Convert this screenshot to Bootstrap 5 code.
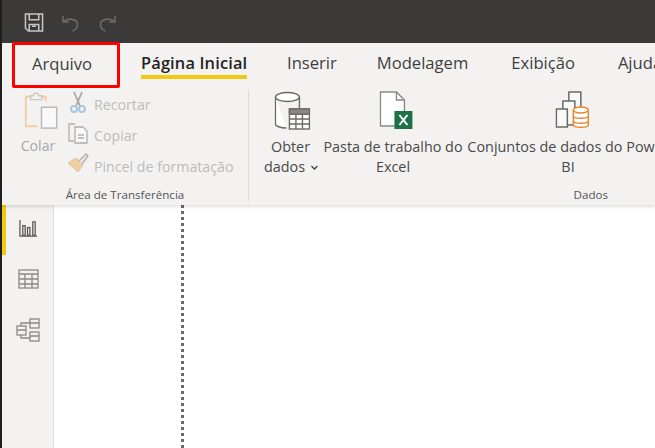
<!DOCTYPE html>
<html lang="pt">
<head>
<meta charset="utf-8">
<title>Power BI</title>
<link href="https://cdn.jsdelivr.net/npm/bootstrap@5.3.0/dist/css/bootstrap.min.css" rel="stylesheet">
<style>
html,body{height:448px;overflow:hidden;background:#fff}
body{font-family:"Open Sans","Noto Sans",sans-serif;color:#333;border-left:2px solid #1e1e1e;width:655px}
.titlebar{height:43px;background:#3b3a39;padding:13px 0 0 22px;gap:19px}
.undoicon{margin-top:1px;margin-left:-1px}
.tabsbar{height:43px;background:#f3f2f1;font-size:16.6px;color:#3f3e3d}
.tabitem{height:46px;margin-top:-1px;line-height:42px;white-space:nowrap;flex:none}
.tabfile{width:108px;margin-left:10px;border:3px solid #f00;border-radius:2px;padding-left:17px;line-height:38px;position:relative;z-index:2}
.tabhome{margin-left:21px;width:106px;font-weight:600;color:#252423;font-size:16.400px;letter-spacing:.15px}
.tabhome span{display:block;height:4px;background:#f2c811;margin-top:-9px;position:relative}
.tabinsert{margin-left:40px}
.tabmodel{margin-left:40px}
.tabnext{margin-left:43px}
.ribbon{height:119px;background:#f3f2f1;box-shadow:0 2px 3px rgba(0,0,0,.12);position:relative;z-index:1;font-size:14.200px;overflow:hidden}
.clipgroup{width:247px;flex:none;border-right:1px solid #dcdbda;margin-top:4px;height:111px;position:relative}
.pasteitem{width:58px;flex:none;text-align:center;color:#a9a8a7;padding-top:2px;line-height:20px;margin-left:7px}
.pasteitem svg{display:block;margin:0 auto 6px 14px}
.smallitems{color:#bdbcbb;margin-top:-1px;padding-top:1px}
.smallrow{height:31px;line-height:30px;gap:5px;white-space:nowrap}
.smallrow svg{width:22px;flex:none}
.grouplabel{position:absolute;left:0;right:0;bottom:-2px;text-align:center;font-size:11.600px;line-height:16px;color:#555453}
.datagroup{flex:1 1 auto;position:relative;height:111px;margin-top:4px;min-width:0}
.labeldata{left:auto;right:47px}
.bigitem{position:absolute;top:1px;text-align:center;line-height:20px;color:#4a4948;white-space:nowrap;transform:translateX(-50%);font-size:14.400px}
.bigicon{display:block;margin:0 auto 6px;position:relative}
.iconget{left:2px}
.iconexcel{left:3px}
.iconsets{left:4px;margin-bottom:8px}
.chevron{margin-left:5px;margin-right:-1px;vertical-align:middle}
.workspace{height:243px}
.siderail{width:52px;flex:none;background:#f3f2f1;border-right:1px solid #e1dfdd}
.railitem{height:50px;display:flex;align-items:center;justify-content:center;padding-left:1px}
.railactive{box-shadow:inset 4px 0 0 #f2c811}
.railchart{margin-top:-3px}
.railtable{margin-top:-2px}
.canvasarea{flex:1 1 auto;background:#fff}
.dottedline{width:0;height:100%;margin-left:127px;border-left:3px dotted #6b6a69}
</style>
</head>
<body>
<header class="titlebar d-flex align-items-start">
  <svg width="20" height="19" viewBox="0 0 20 20" fill="none" stroke="#c8c6c4" stroke-width="1.600"><path d="M1 1h18v18H4l-3-3z"/><path d="M5 1v6h10V1M5 19v-7h10v7M8 14h4"/></svg>
  <svg class="undoicon" width="18" height="18" viewBox="0 0 18 18" fill="none" stroke="#6b6a69" stroke-width="1.600"><path d="M1 2v6h6M1.500 8C6 3 16 5 15.500 11c-.2 3-2 5-5 6"/></svg>
  <svg class="undoicon" width="18" height="18" viewBox="0 0 18 18" fill="none" stroke="#6b6a69" stroke-width="1.600"><path d="M17 2v6h-6M16.500 8C12 3 2 5 2.500 11c.2 3 2 5 5 6"/></svg>
</header>
<nav class="tabsbar d-flex">
  <div class="tabitem tabfile">Arquivo</div>
  <div class="tabitem tabhome">Página Inicial<span></span></div>
  <div class="tabitem tabinsert">Inserir</div>
  <div class="tabitem tabmodel">Modelagem</div>
  <div class="tabitem tabnext">Exibição</div>
  <div class="tabitem tabnext">Ajuda</div>
</nav>
<section class="ribbon d-flex">
  <div class="clipgroup d-flex">
    <div class="pasteitem">
      <svg width="36" height="38" viewBox="0 0 36 40" fill="none"><path d="M7 5H2v31h12" stroke="#f0cfa3" stroke-width="2"/><path d="M18 5h5v5" stroke="#f0cfa3" stroke-width="2"/><path d="M7 8V4h3c1-4 5-4 6 0h3v4z" fill="#f3f2f1" stroke="#c9c8c7" stroke-width="1.500"/><rect x="18.500" y="16" width="16" height="22" fill="#f8f8f8" stroke="#b9b8b7" stroke-width="1.500"/></svg>
      Colar
    </div>
    <div class="smallitems">
      <div class="smallrow d-flex">
        <svg width="22" height="24" viewBox="0 0 22 24" fill="none"><path d="M7 2l6 14M15 2L9 16" stroke="#a8a7a6" stroke-width="1.800"/><circle cx="7" cy="19" r="3" stroke="#a9c6e2" stroke-width="2"/><circle cx="15" cy="19" r="3" stroke="#a9c6e2" stroke-width="2"/></svg>
        Recortar
      </div>
      <div class="smallrow d-flex">
        <svg width="22" height="24" viewBox="0 0 22 24" fill="none" stroke="#b0afae" stroke-width="1.300"><path d="M8 3H2v17h5"/><path d="M8 6h8l4 4v12H8z" fill="#f8f8f8"/><path d="M11 14h6M11 17h6"/></svg>
        Copiar
      </div>
      <div class="smallrow d-flex">
        <svg width="22" height="22" viewBox="0 0 22 22" fill="none"><path d="M1 11l8-5 7 7-5 7z" fill="#f0cfa3" stroke="#d9c3a6"/><path d="M12 9l7-7 2 2-6 8" fill="#e8e8e8" stroke="#b0afae" stroke-width="1.300"/></svg>
        Pincel de formatação
      </div>
    </div>
    <div class="grouplabel">Área de Transferência</div>
  </div>
  <div class="datagroup">
    <div class="bigitem" style="left:41.500px">
      <svg class="bigicon iconget" width="36" height="40" viewBox="0 0 36 40" fill="none" stroke="#6b6a69" stroke-width="1.400"><path d="M1 6v27c0 2 5 4 11 4" fill="#fff"/><path d="M25 6v14"/><ellipse cx="13" cy="6" rx="12" ry="4.500" fill="#fff"/><rect x="15" y="18" width="20" height="20" fill="#fff"/><path d="M15 23h20M15 28h20M15 33h20M21.500 23v15M28 23v15"/><rect x="15" y="18" width="20" height="5" fill="#8a8988"/></svg>
      Obter<br>dados<svg class="chevron" width="8" height="6" viewBox="0 0 8 6" fill="none" stroke="#444" stroke-width="1.300"><path d="M1 1l3 3 3-3"/></svg>
    </div>
    <div class="bigitem" style="left:144px">
      <svg class="bigicon iconexcel" width="34" height="40" viewBox="0 0 34 40" fill="none"><path d="M1 1h16l8 8v26H1z" fill="#fff" stroke="#8a8988" stroke-width="1.400"/><path d="M17 1v8h8" stroke="#8a8988" stroke-width="1.400"/><rect x="15" y="20" width="18" height="18" fill="#1e7145"/><path d="M20 24l8 10M28 24l-8 10" stroke="#fff" stroke-width="2"/></svg>
      Pasta de trabalho do<br>Excel
    </div>
    <div class="bigitem" style="left:319px">
      <svg class="bigicon iconsets" width="34" height="38" viewBox="0 0 34 38" fill="none" stroke="#6b6a69" stroke-width="1.500"><rect x="13.500" y="1" width="12" height="30" fill="#f8f8f8"/><rect x="7.500" y="10" width="12" height="24" fill="#f8f8f8"/><rect x="1" y="18" width="11" height="18" fill="#f8f8f8"/><g stroke="#e8862e"><path d="M18 19v15c0 3 15 3 15 0V19" fill="#fff"/><ellipse cx="25.500" cy="19" rx="7.500" ry="3" fill="#fff"/><path d="M18 25c0 3 15 3 15 0M18 30c0 3 15 3 15 0"/></g></svg>
      Conjuntos de dados do Power<br>BI
    </div>
    <div class="grouplabel labeldata">Dados</div>
  </div>
</section>
<main class="workspace d-flex">
  <aside class="siderail">
    <div class="railitem railactive"><svg class="railchart" width="19" height="19" viewBox="0 0 20 20" fill="none" stroke="#555453" stroke-width="1.300"><path d="M1 1v17h18"/><rect x="4" y="7" width="2.500" height="10"/><rect x="9" y="9" width="2.500" height="8"/><rect x="14.500" y="3" width="2.500" height="14"/></svg></div>
    <div class="railitem"><svg class="railtable" width="21" height="20" viewBox="0 0 21 20" fill="none" stroke="#8a8988" stroke-width="1.300"><rect x="1" y="1" width="19" height="18"/><path d="M1 5h19M1 10h19M1 15h19M7 5v14M14 5v14"/></svg></div>
    <div class="railitem"><svg width="24" height="24" viewBox="0 0 24 24" fill="none" stroke="#8a8988" stroke-width="1.300"><rect x="1" y="8" width="9" height="9"/><rect x="14" y="1" width="9" height="9"/><rect x="14" y="14" width="9" height="9"/><path d="M1 12h9M14 5h9M14 18h9M5 8V5h9M5 17v3h9"/></svg></div>
  </aside>
  <div class="canvasarea"><div class="dottedline"></div></div>
</main>
<script src="https://cdn.jsdelivr.net/npm/bootstrap@5.3.0/dist/js/bootstrap.bundle.min.js"></script>
</body>
</html>
